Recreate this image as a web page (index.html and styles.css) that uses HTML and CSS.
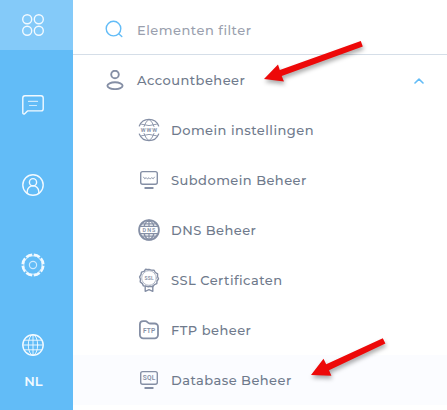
FILE: index.html
```html
<!DOCTYPE html>
<html lang="nl">
<head>
<meta charset="utf-8">
<title>Accountbeheer</title>
<link rel="stylesheet" href="styles.css">
</head>
<body>
<div class="app">
  <aside class="rail">
    <a class="rail-item active"><svg width="26" height="26" viewBox="0 0 26 26"><circle cx="7.2" cy="7.2" r="4.5"/><circle cx="18.8" cy="7.2" r="4.5"/><circle cx="7.2" cy="18.8" r="4.5"/><circle cx="18.8" cy="18.8" r="4.5"/></svg></a>
    <a class="rail-item"><svg width="26" height="26" viewBox="0 0 26 26"><path d="M5 3.7h16a2.2 2.2 0 0 1 2.2 2.2v10.8a2.2 2.2 0 0 1-2.2 2.2H7.5l-2.8 2.8c-.8.7-1.9.3-1.9-.8V5.9A2.2 2.2 0 0 1 5 3.7z"/><path class="soft" d="M8.500 9.400h9M9.500 13.500h7"/></svg></a>
    <a class="rail-item"><svg width="26" height="26" viewBox="0 0 26 26"><circle cx="13" cy="13" r="10.2"/><circle cx="13" cy="10.2" r="3.6"/><path d="M7.2 21.2v-1.600a5.800 5.800 0 0 1 11.600 0v1.600"/></svg></a>
    <a class="rail-item"><svg width="26" height="26" viewBox="0 0 26 26"><circle class="teeth" cx="13" cy="13" r="10.4" pathLength="80"/><circle class="ring" cx="13" cy="13" r="9.2"/><circle class="soft" cx="13" cy="13" r="3.6"/></svg></a>
    <a class="rail-item"><svg width="26" height="26" viewBox="0 0 26 26"><circle cx="13" cy="13" r="10.2"/><g class="thin"><ellipse cx="13" cy="13" rx="4.7" ry="10.2"/><path d="M13 2.8v20.4M2.8 13h20.4M4.3 8.2h17.4M4.3 17.8h17.4"/></g></svg></a>
    <span class="lang">NL</span>
  </aside>
  <main class="panel">
    <div class="search">
      <svg class="find" width="20" height="20" viewBox="0 0 20 20"><circle cx="8.5" cy="8.6" r="7.3"/><path d="M14 14l2.8 2.6"/></svg>
      <span class="placeholder">Elementen filter</span>
    </div>
    <div class="row group">
      <svg width="20" height="20" viewBox="0 0 20 20"><circle cx="10" cy="4.5" r="3.8"/><ellipse cx="10" cy="15.7" rx="7.6" ry="3.4"/></svg>
      <span class="label">Accountbeheer</span>
      <svg class="chevron" width="10" height="6" viewBox="0 0 10 6"><path d="M1 5l4-3.8L9 5"/></svg>
    </div>
    <nav>
      <a class="row"><svg width="24" height="24" viewBox="0 0 24 24"><path class="mid" d="M2.3 8a10.4 10.4 0 0 1 19.4 0M2.3 16a10.4 10.4 0 0 0 19.4 0"/><path class="thin" d="M4.5 6.3Q12 9 19.5 6.3M4.5 17.7Q12 15 19.5 17.7M7 8.5Q8.7 3 12 1.5Q15.3 3 17 8.5M7 15.5Q8.7 21 12 22.5Q15.3 21 17 15.5"/><text class="www" x="12.4" y="14">WWW</text></svg><span class="label">Domein instellingen</span></a>
      <a class="row"><svg width="24" height="24" viewBox="0 0 24 24"><rect x="3.7" y="3.6" width="16.6" height="12.6" rx="2"/><path class="thin" d="M6.5 9.200q1 3 2.750 .5q1 2.500 2.750 0q1 2.500 2.750 0q1.500 2.500 2.750-.5"/><path class="bold" d="M8.200 20h7.600"/></svg><span class="label">Subdomein Beheer</span></a>
      <a class="row"><svg width="24" height="24" viewBox="0 0 24 24"><circle class="bold" cx="12" cy="12" r="9.9"/><path class="mid" d="M4.5 5.9h15M4.5 18.1h15M7.2 8q1-4 4.8-6q3.8 2 4.8 6M7.2 16q1 4 4.8 6q3.8-2 4.8-6M12 2v6M12 16v6M3 8.3h18M3 15.7h18"/><text x="12.5" y="14" class="dns">DNS</text></svg><span class="label">DNS Beheer</span></a>
      <a class="row"><svg width="24" height="24" viewBox="0 0 24 24"><path d="M12 1.3l2.4.8 2.7.1 1.2 2.3 2.3 1.4-.1 2.6 1 2.3-1.5 2.2-.2 2.7-2.5 1-1.7 2-2.6-.4-1.7.4-2.4-.6-2.5-.2-1-2.3-2.2-1.7.3-2.7-.9-2.3 1.4-2.2.5-2.6 2.6-.8 1.600-2 2.600.4z"/><circle class="faint" cx="12" cy="10" r="7.3"/><path d="M8.2 18v5.3l3.8-1.6 3.8 1.6V18"/><text x="12.2" y="11.8" class="ssl">SSL</text></svg><span class="label">SSL Certificaten</span></a>
      <a class="row"><svg width="24" height="24" viewBox="0 0 24 24"><path class="bold" d="M2.9 6.2a3.2 3.2 0 0 1 3.2-3.1h2.3c2 0 2.5 2.4 4.5 2.4h4.8a3.3 3.3 0 0 1 3.3 3.3v8.3a3.3 3.3 0 0 1-3.3 3.3H6.2a3.3 3.3 0 0 1-3.3-3.3z"/><text x="12.2" y="15.4">FTP</text></svg><span class="label">FTP beheer</span></a>
      <a class="row hover"><svg width="24" height="24" viewBox="0 0 24 24"><rect x="3.7" y="3.6" width="16.6" height="12.6" rx="2"/><text x="12.2" y="12.3">SQL</text><path class="bold" d="M8.200 20h7.600"/></svg><span class="label">Database Beheer</span></a>
    </nav>
  </main>
  <svg class="arrows" width="447" height="410" viewBox="0 0 447 410"><path d="M264 79l14-14.5 1.8 5.6L360.8 41l2 5.6L281.7 76l2.3 5.6z"/><path d="M311 375l12.5-16.2 2.7 5.4L382.8 338.3l2.6 5.3L329 370.3l2.4 5.5z"/></svg>
</div>
</body>
</html>
```
FILE: styles.css
```css
* { box-sizing: border-box; }
body { margin: 0; overflow: hidden; background: #fff; font-family: Montserrat, Inter, sans-serif; }
svg { display: block; flex: none; fill: none; stroke: currentColor; stroke-width: 1.4; stroke-linecap: round; stroke-linejoin: round; }
.app { position: relative; display: flex; width: 447px; height: 410px; }
.rail { display: flex; flex-direction: column; align-items: center; width: 73px; background: #62bcf7; color: #f2faff; }
.rail-item { display: flex; align-items: center; justify-content: center; width: 100%; height: 50px; margin-bottom: 30px; padding-right: 7px; }
.rail-item:nth-child(5) { margin-bottom: 0; }
.active { background: #84caf9; }
.soft { opacity: .75; stroke-width: 1.2; }
.thin { stroke-width: .9; }
.mid { stroke-width: 1.2; }
.faint { stroke-width: .6; }
.bold { stroke-width: 1.8; }
.teeth { stroke-width: 2.4; stroke-dasharray: 8 2; stroke-dashoffset: -1; stroke-linecap: butt; }
.ring { stroke-width: .8; }
.lang { width: 100%; margin-top: 3px; padding-right: 6px; text-align: center; font-size: 13px; line-height: 16px; font-weight: 600; letter-spacing: .2px; }
.panel { flex: 1; color: #6f7a8c; font-size: 13px; font-weight: 500; }
.search { display: flex; align-items: center; height: 55px; padding: 6px 0 0 32px; border-bottom: 1px solid #d5dee8; }
.find { color: #62bcf7; }
.placeholder { margin-left: 12px; color: #9a9fae; letter-spacing: .5px; }
.row { display: flex; align-items: center; height: 50px; padding-left: 64px; white-space: nowrap; }
.row svg { margin-right: 10px; color: #858fa5; }
.group { padding-left: 32px; }
.group svg { margin-right: 12px; stroke-width: 1.9; }
.group .chevron { margin: 1px 23px 0 auto; color: #62bcf7; stroke-width: 1.6; }
.row text { fill: currentColor; stroke: none; font-family: Roboto, sans-serif; font-size: 6.6px; font-weight: 600; letter-spacing: .2px; text-anchor: middle; }
.row .www { font-size: 5.5px; letter-spacing: .9px; }
.row .dns { letter-spacing: 1px; font-size: 5.5px; }
.row .ssl { font-size: 5px; }
.hover { background: #fbfcff; }
.label { letter-spacing: .46px; }
.arrows { position: absolute; inset: 0; fill: #ed0909; stroke: none; filter: drop-shadow(1px 3px 2px rgba(0, 0, 0, .33)); pointer-events: none; }
```
